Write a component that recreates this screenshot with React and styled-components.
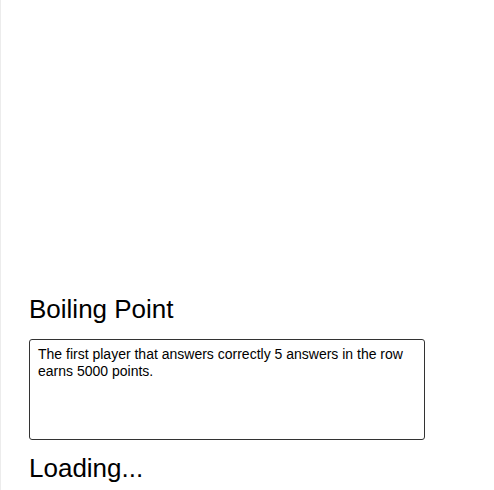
import styled, { createGlobalStyle } from "styled-components";

const GlobalStyle = createGlobalStyle`
	html, body {
		margin: 0;
		padding: 0;
		background: #ffffff;
	}
	body {
		font-family: "Liberation Sans", Arial, sans-serif;
		color: #000000;
	}
`;

const Page = styled.div`
	min-height: 490px;
	border-left: 1px solid #ececec;
	box-sizing: border-box;
	padding: 0 28px;
	display: flex;
	flex-direction: column;
`;

const Cover = styled.div`
	height: 290px;
`;

const Title = styled.h1`
	margin: 0;
	font-size: 26px;
	font-weight: 400;
	line-height: 38px;
`;

const Rules = styled.div`
	margin-top: 11px;
	width: 396px;
	height: 101px;
	box-sizing: border-box;
	border: 1px solid #333333;
	border-radius: 3px;
	padding: 6px 8px;
	font-size: 14px;
	line-height: 17px;
`;

const Status = styled.h2`
	margin: 12px 0 0;
	font-size: 26px;
	font-weight: 400;
	line-height: 32px;
`;

function App() {
	return (
		<>
			<GlobalStyle />
			<Page>
				<Cover />
				<Title>Boiling Point</Title>
				<Rules>
					The first player that answers correctly 5 answers in the row earns 5000 points.
				</Rules>
				<Status>Loading...</Status>
			</Page>
		</>
	);
}

export default App;
